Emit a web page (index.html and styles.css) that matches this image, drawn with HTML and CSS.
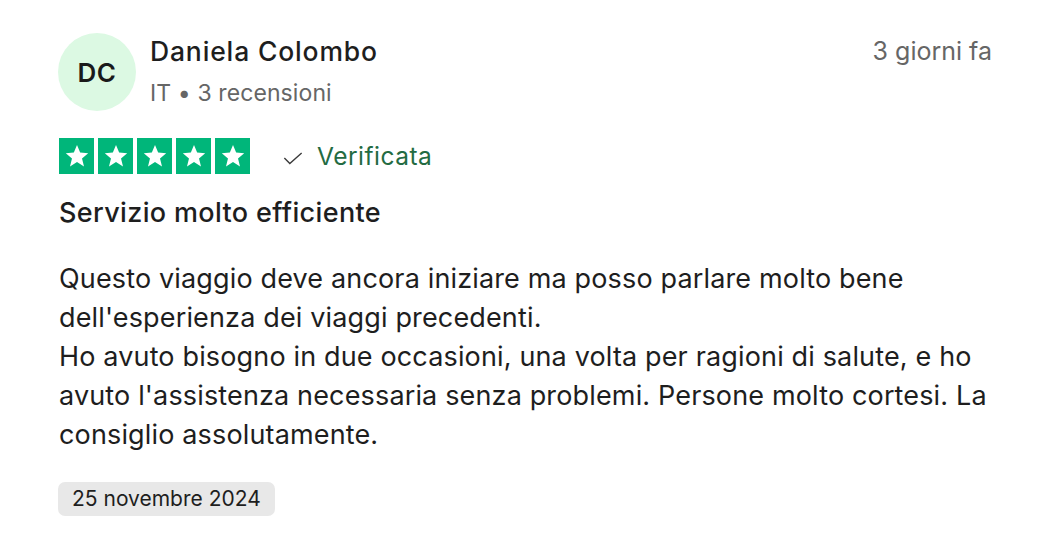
FILE: index.html
```html
<!DOCTYPE html>
<html lang="it">
<head>
<meta charset="utf-8">
<title>Recensione</title>
<link rel="stylesheet" href="styles.css">
</head>
<body>
<article class="review">
  <header class="head">
    <div class="avatar">DC</div>
    <div class="who">
      <div class="name">Daniela Colombo</div>
      <div class="meta">IT • 3 recensioni</div>
    </div>
    <div class="when">3 giorni fa</div>
  </header>
  <div class="rating">
    <div class="stars">
      <span class="star"><svg viewBox="0 0 24 24"><path d="M12 2.6l2.7 6.5 6.9.5-5.3 4.5 1.7 6.8L12 17.2l-6 3.7 1.7-6.8-5.3-4.5 6.9-.5z"/></svg></span>
      <span class="star"><svg viewBox="0 0 24 24"><path d="M12 2.6l2.7 6.5 6.9.5-5.3 4.5 1.7 6.8L12 17.2l-6 3.7 1.7-6.8-5.3-4.5 6.9-.5z"/></svg></span>
      <span class="star"><svg viewBox="0 0 24 24"><path d="M12 2.6l2.7 6.5 6.9.5-5.3 4.5 1.7 6.8L12 17.2l-6 3.7 1.7-6.8-5.3-4.5 6.9-.5z"/></svg></span>
      <span class="star"><svg viewBox="0 0 24 24"><path d="M12 2.6l2.7 6.5 6.9.5-5.3 4.5 1.7 6.8L12 17.2l-6 3.7 1.7-6.8-5.3-4.5 6.9-.5z"/></svg></span>
      <span class="star"><svg viewBox="0 0 24 24"><path d="M12 2.6l2.7 6.5 6.9.5-5.3 4.5 1.7 6.8L12 17.2l-6 3.7 1.7-6.8-5.3-4.5 6.9-.5z"/></svg></span>
    </div>
    <div class="verified">
      <svg class="check" viewBox="0 0 22 14"><path d="M1.5 6.5l6 6L20.5 1"/></svg>
      <span>Verificata</span>
    </div>
  </div>
  <h2 class="title">Servizio molto efficiente</h2>
  <p class="text">Questo viaggio deve ancora iniziare ma posso parlare molto bene dell'esperienza dei viaggi precedenti.<br>Ho avuto bisogno in due occasioni, una volta per ragioni di salute, e ho avuto l'assistenza necessaria senza problemi. Persone molto cortesi. La consiglio assolutamente.</p>
  <div class="date">25 novembre 2024</div>
</article>
</body>
</html>
```
FILE: styles.css
```css
html, body {
  margin: 0;
  background: #ffffff;
}
body {
  font-family: Inter, "Noto Sans", sans-serif;
  color: #1e1e1e;
}
.review {
  padding: 33px 59px 0 58px;
}
.head {
  display: flex;
  align-items: flex-start;
}
.avatar {
  width: 78px;
  height: 78px;
  border-radius: 50%;
  background: #dcf9e3;
  display: flex;
  align-items: center;
  justify-content: center;
  font-size: 26px;
  font-weight: 600;
  letter-spacing: 0.5px;
  color: #1a1a1a;
  flex: none;
}
.who {
  margin-left: 14px;
  flex: 1;
}
.name {
  font-size: 26.5px;
  font-weight: 500;
  letter-spacing: 0.85px;
  line-height: 34px;
  margin-top: 1px;
}
.meta {
  font-size: 23px;
  color: #666666;
  line-height: 30px;
  margin-top: 10px;
  letter-spacing: 0.1px;
}
.when {
  font-size: 25px;
  color: #666666;
  line-height: 34px;
  margin-top: 1px;
  margin-right: 8px;
}
.rating {
  display: flex;
  align-items: center;
  margin-top: 27px;
}
.stars {
  display: flex;
  gap: 4px;
  margin-left: 1px;
}
.star {
  width: 35px;
  height: 36px;
  background: #00b67a;
  display: flex;
  align-items: center;
  justify-content: center;
}
.star svg {
  width: 28px;
  height: 28px;
  fill: #ffffff;
}
.verified {
  display: flex;
  align-items: center;
  margin-left: 33px;
  color: #236b42;
  font-size: 24.5px;
  letter-spacing: 0.5px;
  line-height: 34px;
}
.check {
  width: 20px;
  height: 13px;
  fill: none;
  stroke: #3a3a3a;
  stroke-width: 1.5;
  margin-right: 14px;
  margin-top: 5px;
}
.title {
  margin: 24px 0 0 1px;
  font-size: 27px;
  font-weight: 500;
  letter-spacing: 0.35px;
  line-height: 30px;
}
.text {
  margin: 31px 0 0 1px;
  font-size: 27px;
  letter-spacing: 0.15px;
  line-height: 39px;
}
.date {
  display: inline-block;
  margin: 28px 0 0 0;
  background: #e8e8e8;
  border-radius: 7px;
  padding: 0 14px;
  font-size: 21px;
  line-height: 34px;
  color: #1e1e1e;
}
```
